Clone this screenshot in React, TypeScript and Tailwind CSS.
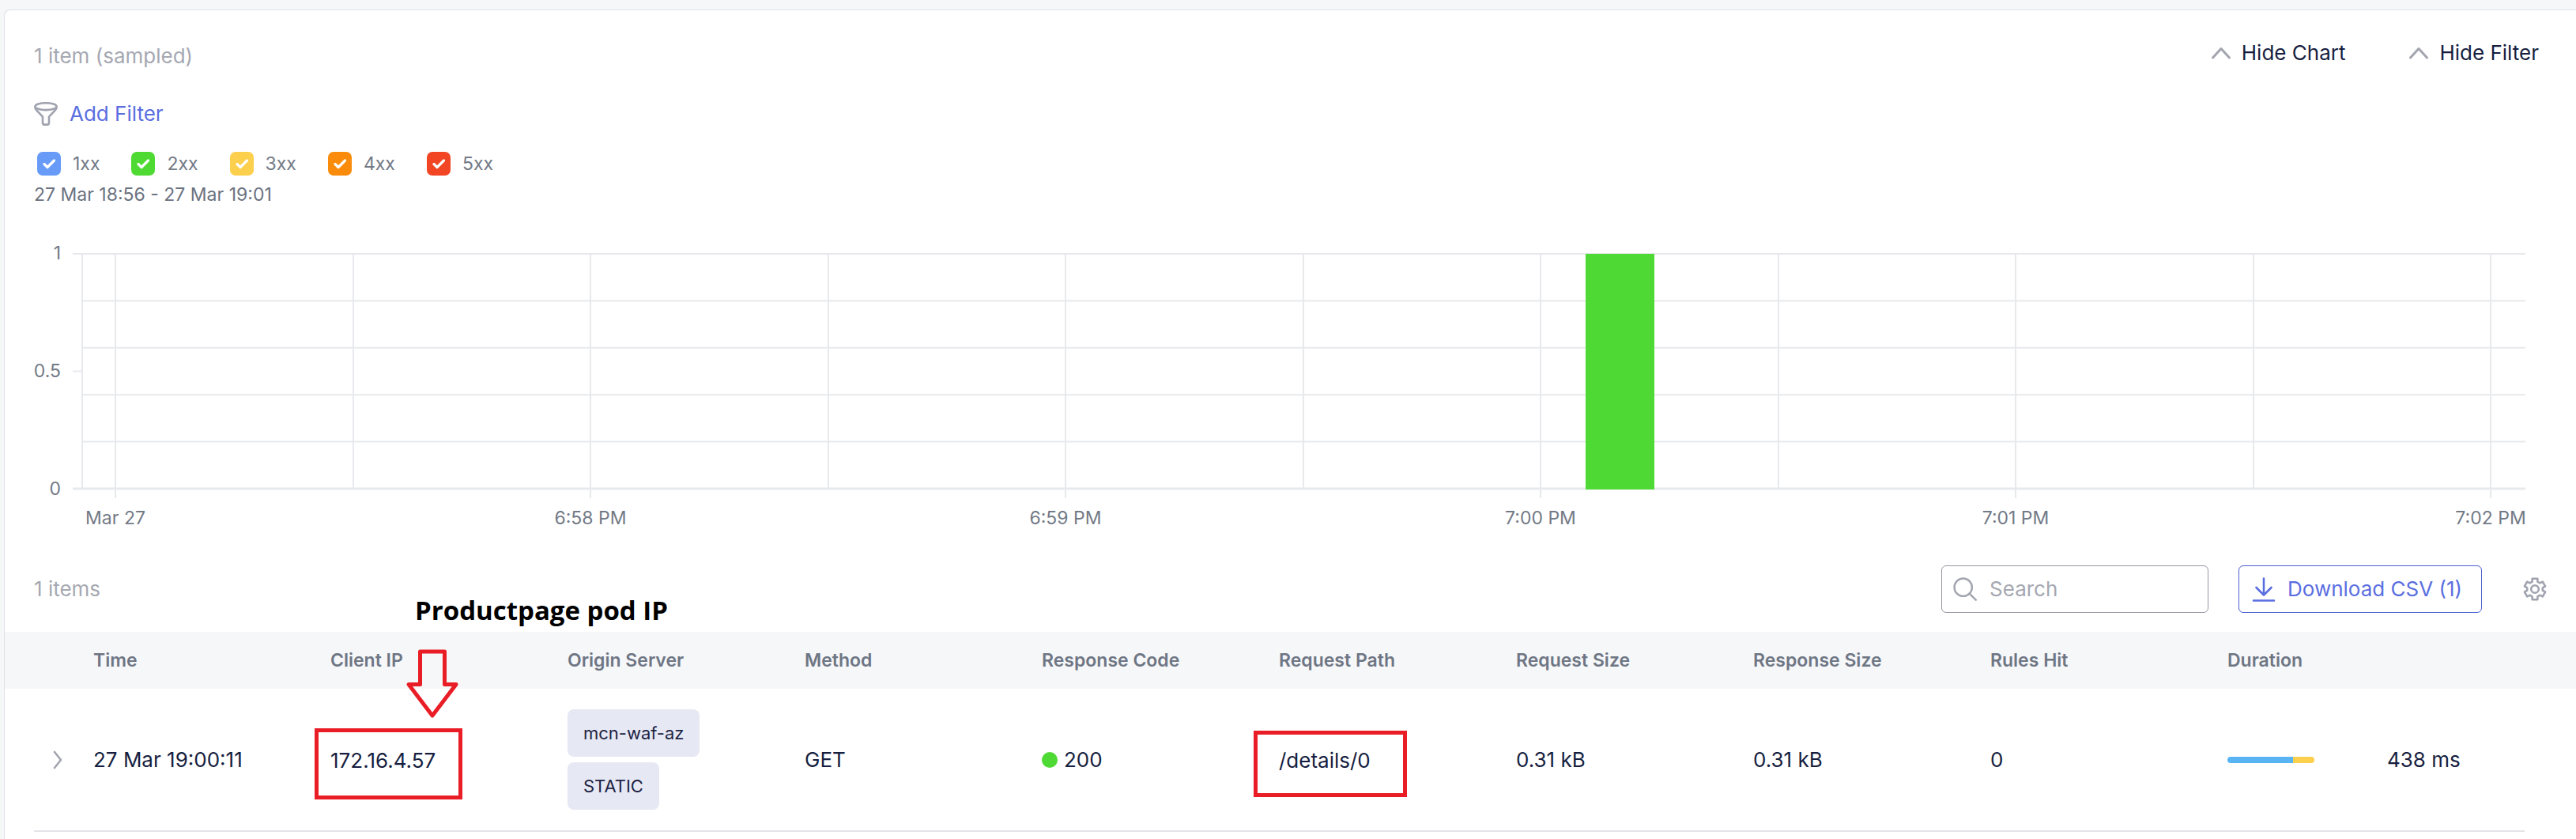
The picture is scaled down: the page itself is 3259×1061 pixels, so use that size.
import React, { useState } from "react";

const statuses = [
  { label: "1xx", color: "bg-[#689bf8]" },
  { label: "2xx", color: "bg-[#4fda33]" },
  { label: "3xx", color: "bg-[#fccf4c]" },
  { label: "4xx", color: "bg-[#fb8c0b]" },
  { label: "5xx", color: "bg-[#f14524]" },
];

const ticks = ["Mar 27", "6:58 PM", "6:59 PM", "7:00 PM", "7:01 PM", "7:02 PM"];

const columns = [
  "Time",
  "Client IP",
  "Origin Server",
  "Method",
  "Response Code",
  "Request Path",
  "Request Size",
  "Response Size",
  "Rules Hit",
];

const axis = { start: 146, step: 601, top: 322, bottom: 619 };

function ChevronUp() {
  return (
    <svg className="h-[26px] w-[26px]" viewBox="0 0 26 26" fill="none" stroke="#a2a5af" strokeWidth="3" strokeLinecap="round" strokeLinejoin="round" aria-hidden="true">
      <path d="M2.500 19L13 7.500L23.500 19" />
    </svg>
  );
}

function FunnelIcon() {
  return (
    <svg className="h-[30px] w-[30px]" viewBox="0 0 30 30" fill="none" stroke="#a0a3af" strokeWidth="2.600" strokeLinejoin="round" aria-hidden="true">
      <ellipse cx="15" cy="5.700" rx="13.600" ry="4.400" />
      <path d="M1.400 6c0 2 .6 3 1.800 4.300l7.800 8.400v7.600c0 1.400.9 2.300 2.300 2.300h3.400c1.400 0 2.300-.9 2.300-2.300v-7.600l7.800-8.400c1.200-1.300 1.800-2.300 1.800-4.300" />
    </svg>
  );
}

function StatusFilter({ label, color }: { label: string; color: string }) {
  const [checked, setChecked] = useState(true);
  return (
    <label className="flex items-center gap-[15px] text-[23px] leading-[30px] text-[#737a86]">
      <span className={"relative block h-[30px] w-[30px] rounded-[7px] " + color}>
        <input type="checkbox" checked={checked} onChange={() => setChecked(!checked)} className="peer absolute inset-0 m-0 h-full w-full cursor-pointer appearance-none" />
        <svg className="pointer-events-none h-[30px] w-[30px] opacity-0 peer-checked:opacity-100" viewBox="0 0 30 30" fill="none" stroke="#fff" strokeWidth="3.200" strokeLinecap="round" strokeLinejoin="round" aria-hidden="true">
          <path d="M9 15.500L13 19.500L21.500 11" />
        </svg>
      </span>
      {label}
    </label>
  );
}

function Chart() {
  const { start, step, top, bottom } = axis;
  const rows = [0, 1, 2, 3, 4];
  return (
    <div className="mt-[9px]">
      <svg className="block h-auto w-full" viewBox="6 272 3253 410" role="img" aria-label="Requests by response code" fontFamily='Inter, "Liberation Sans", sans-serif' fontSize="23" fill="#737a86">
        <g stroke="#e8e9ec" strokeWidth="2">
          {rows.map((i) => (
            <path key={i} d={"M" + (i === 0 ? 92 : 104) + " " + (top + i * 59.4) + "H3195"} />
          ))}
          <path d={"M104 " + top + "V" + bottom + "M92 470.500H104"} />
          {ticks.map((t, i) => (
            <path key={t} d={"M" + (start + i * step) + " " + top + "V" + (bottom + 12)} />
          ))}
          {rows.map((i) => (
            <path key={"half" + i} d={"M" + (start + 301 + i * step) + " " + top + "V" + bottom} />
          ))}
          <path d={"M92 " + bottom + "H3195"} strokeWidth="3" />
        </g>
        <rect x="2006" y={top} width="87" height={bottom + 1 - top} fill="#4fd934" />
        <g textAnchor="end">
          <text x="77" y="329">1</text>
          <text x="77" y="478">0.5</text>
          <text x="77" y="627">0</text>
        </g>
        <g textAnchor="middle">
          {ticks.map((t, i) => (
            <text key={t} x={start + i * step} y="664">{t}</text>
          ))}
        </g>
      </svg>
    </div>
  );
}

function SearchIcon() {
  return (
    <svg className="h-[30px] w-[30px] shrink-0" viewBox="0 0 30 30" fill="none" stroke="#a2a5af" strokeWidth="2.400" strokeLinecap="round" aria-hidden="true">
      <circle cx="12.700" cy="12.700" r="11.200" />
      <path d="M20.600 20.600L28.700 28.700" />
    </svg>
  );
}

function DownloadIcon() {
  return (
    <svg className="h-8 w-[30px] shrink-0" viewBox="0 0 30 32" fill="none" stroke="#5a6ee0" strokeWidth="2.600" strokeLinecap="round" strokeLinejoin="round" aria-hidden="true">
      <path d="M15 2.500V23M5.500 14L15 23.500L24.500 14M2 30.500H28" />
    </svg>
  );
}

// Six-toothed outline: each tooth has two points on the inner and two on the outer radius.
const gearPoints = [0, 1, 2, 3, 4, 5]
  .flatMap((tooth) =>
    [
      [-20, 10],
      [-14, 13.600],
      [14, 13.600],
      [20, 10],
    ].map(([offset, radius]) => {
      const angle = ((tooth * 60 + offset - 90) * Math.PI) / 180;
      return (15 + radius * Math.cos(angle)).toFixed(1) + "," + (15 + radius * Math.sin(angle)).toFixed(1);
    })
  )
  .join(" ");

function GearIcon() {
  return (
    <svg className="h-[30px] w-[30px]" viewBox="0 0 30 30" fill="none" stroke="#a0a3af" strokeWidth="2.600" strokeLinejoin="round" aria-hidden="true">
      <polygon points={gearPoints} />
      <circle cx="15" cy="15" r="4.800" />
    </svg>
  );
}

function Tag({ children }: { children: React.ReactNode }) {
  return <span className="flex h-[60px] items-center rounded-lg bg-[#e6e8f3] px-5 text-[22px] text-[#1c2344]">{children}</span>;
}

function Annotation() {
  return (
    <div className="pointer-events-none absolute bottom-full left-[122px] mb-4 whitespace-nowrap text-[#000]">
      <p className="font-['Open_Sans'] text-[33px] leading-[50px] font-bold">Productpage pod IP</p>
      <svg className="mt-[23px] -ml-3 block h-[90px] w-[68px]" viewBox="0 0 68 90" fill="none" stroke="#e91d25" strokeWidth="5" strokeLinejoin="round" aria-hidden="true">
        <path d="M18.500 4H49.500V45.500H64L34 85L4 45.500H18.500Z" />
      </svg>
    </div>
  );
}

export default function App() {
  return (
    <div className="min-h-screen bg-[#f6f7f9] pt-3 pl-[5px] font-['Inter','Liberation_Sans',sans-serif] text-[26px] leading-8 text-[#161e40]">
      <main className="min-h-[1049px] rounded-tl-lg border-t border-l border-[#dfe2e8] bg-white">
        <header className="flex items-start justify-between pt-[38px] pr-[47px] pl-[37px]">
          <p className="pt-1 text-[#a5a8b2]">1 item (sampled)</p>
          <div className="flex gap-20">
            <button type="button" className="flex items-center gap-[13px]"><ChevronUp />Hide Chart</button>
            <button type="button" className="flex items-center gap-[13px]"><ChevronUp />Hide Filter</button>
          </div>
        </header>
        <section className="px-[37px] pt-[41px]">
          <button type="button" className="flex items-center gap-[15px] text-[#5a6ee0]"><FunnelIcon />Add Filter</button>
          <div className="mt-8 flex gap-10 pl-1">
            {statuses.map((s) => <StatusFilter key={s.label} {...s} />)}
          </div>
          <p className="mt-2 text-[23px] leading-8 text-[#6b7280]">27 Mar 18:56 - 27 Mar 19:01</p>
        </section>
        <Chart />
        <section className="flex items-center pt-[34px] pr-[37px] pb-6 pl-[37px]">
          <p className="grow text-[#a5a8b2]">1 items</p>
          <label className="flex h-[60px] w-[338px] items-center gap-4 rounded-md border border-[#9699a3] px-[14px]">
            <SearchIcon />
            <input type="search" aria-label="Search" placeholder="Search" className="w-full min-w-0 bg-transparent outline-none placeholder:text-[#a5a8b2]" />
          </label>
          <button type="button" className="ml-[38px] flex h-[60px] items-center gap-[15px] rounded-md border border-[#4a5ecf] pr-6 pl-4 text-[#5a6ee0]"><DownloadIcon />Download CSV (1)</button>
          <button type="button" aria-label="Table settings" className="ml-[52px]"><GearIcon /></button>
        </section>
        <table className="w-full table-fixed text-left">
          <thead className="h-[72px] bg-[#f6f7f9] text-[23px] text-[#6e7684]">
            <tr>
              <th className="w-[112px]" aria-label="Expand" />
              {columns.map((c) => <th key={c} className="w-[300px] p-0 font-semibold">{c}</th>)}
              <th className="p-0 font-semibold">Duration</th>
            </tr>
          </thead>
          <tbody>
            <tr className="h-[179px]">
              <td className="p-0 pl-[59px]">
                <button type="button" aria-label="Expand row" className="block">
                  <svg className="h-7 w-4" viewBox="0 0 16 28" fill="none" stroke="#a2a5af" strokeWidth="2.600" strokeLinecap="round" strokeLinejoin="round" aria-hidden="true"><path d="M4 4L12 14L4 24" /></svg>
                </button>
              </td>
              <td className="p-0">27 Mar 19:00:11</td>
              <td className="p-0 pt-2.5">
                <div className="relative -ml-5 flex h-[90px] w-[187px] items-center border-[5px] border-[#e91d25] pb-2 pl-[15px]">
                  172.16.4.57
                  <Annotation />
                </div>
              </td>
              <td className="p-0"><div className="flex flex-col items-start gap-[7px]"><Tag>mcn-waf-az</Tag><Tag>STATIC</Tag></div></td>
              <td className="p-0">GET</td>
              <td className="p-0"><span className="flex items-center gap-2"><i className="h-5 w-5 rounded-full bg-[#4fd934]" />200</span></td>
              <td className="p-0 pt-2.5"><div className="-ml-8 flex h-[84px] w-[194px] items-center border-[5px] border-[#e91d25] pb-2 pl-[27px]">/details/0</div></td>
              <td className="p-0">0.31 kB</td>
              <td className="p-0">0.31 kB</td>
              <td className="p-0">0</td>
              <td className="p-0">
                <div className="flex items-center gap-[92px]">
                  <div className="flex h-2 w-[110px] overflow-hidden rounded"><i className="w-3/4 bg-[#58b4f2]" /><i className="w-1/4 bg-[#fccf4c]" /></div>
                  438 ms
                </div>
              </td>
            </tr>
          </tbody>
        </table>
        <hr className="mr-[65px] ml-[37px] border-t-2 border-[#e4e5e8]" />
      </main>
    </div>
  );
}
